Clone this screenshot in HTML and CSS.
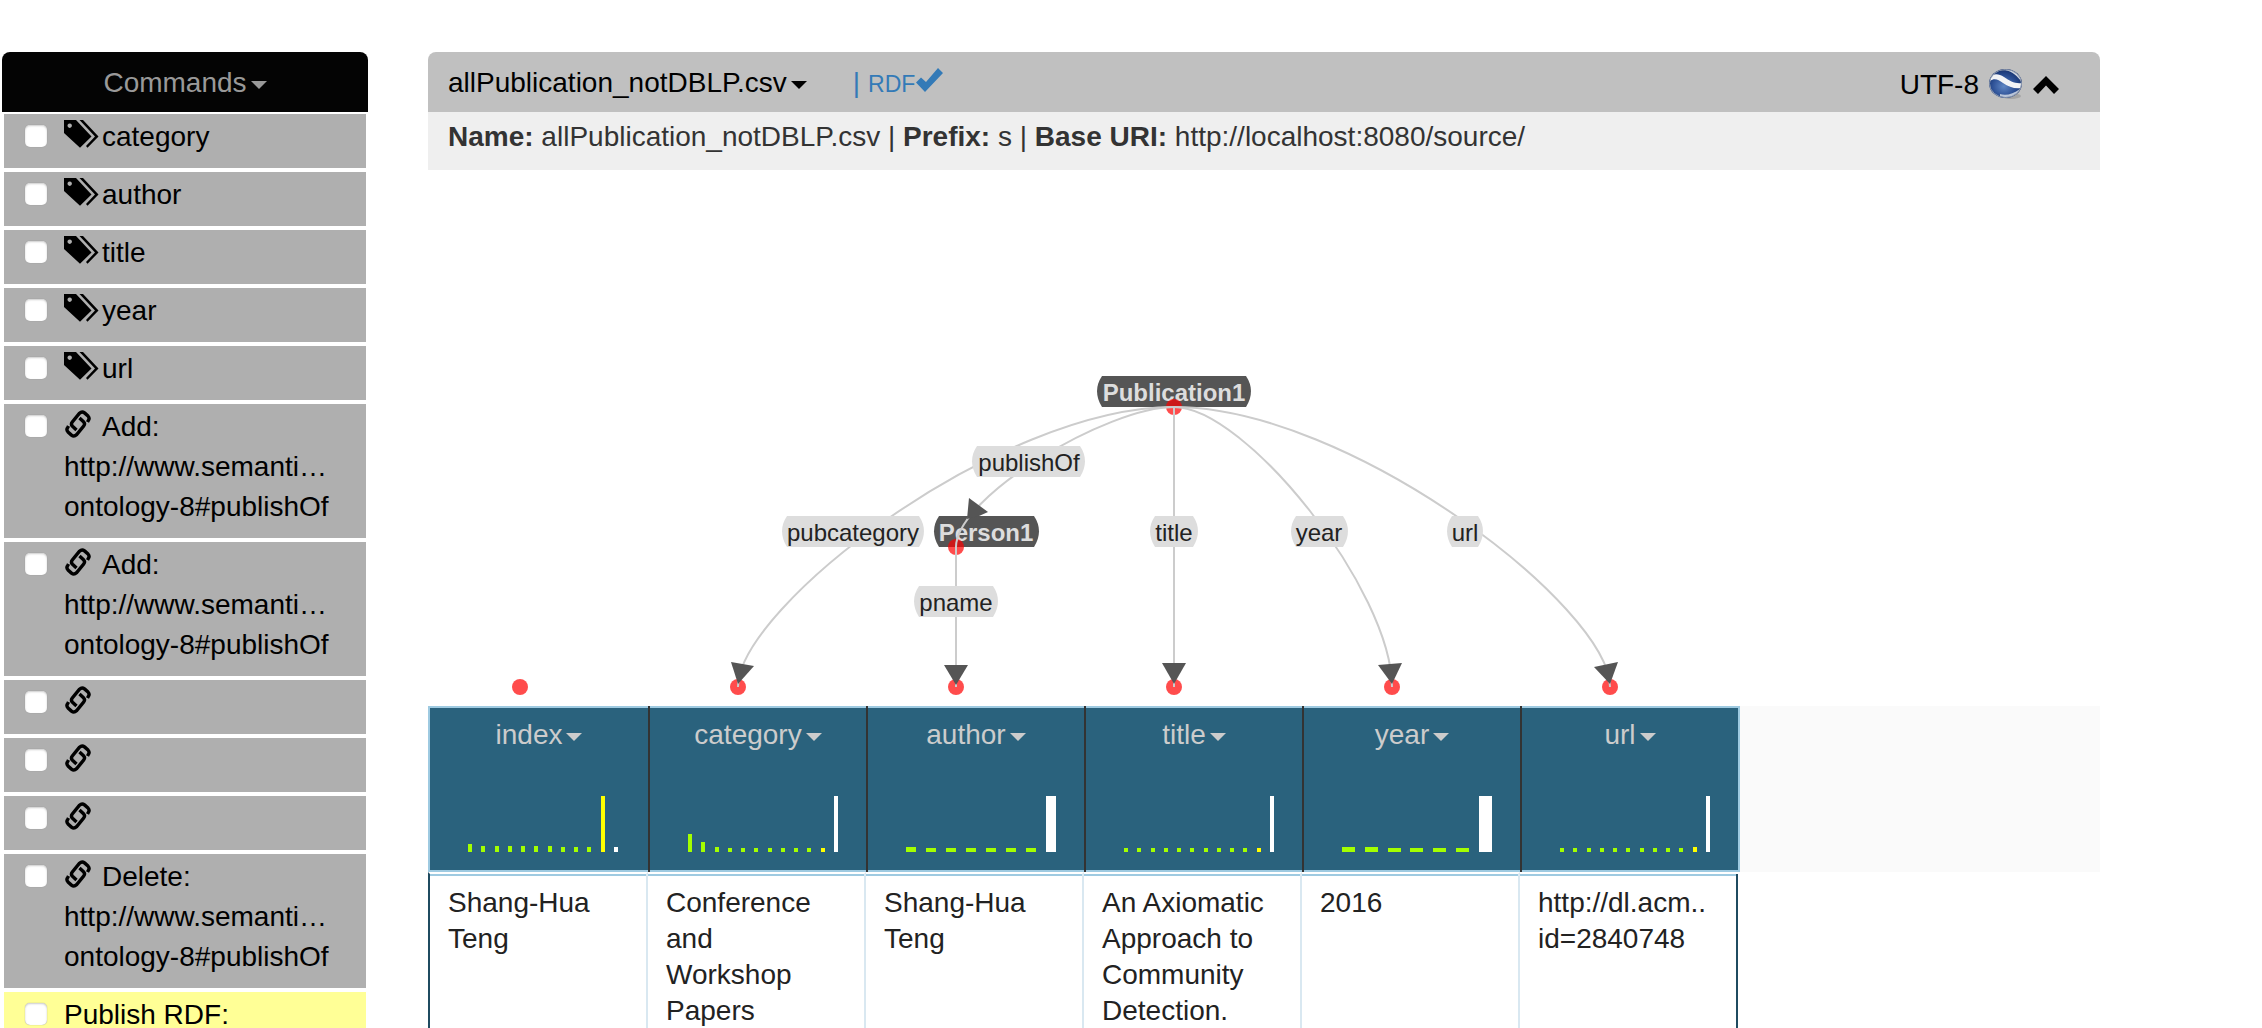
FILE: index.html
```html
<!DOCTYPE html>
<html lang="en">
<head>
<meta charset="utf-8">
<title>allPublication_notDBLP.csv</title>
<link rel="stylesheet" href="styles.css">
</head>
<body>
<svg class="sprite" aria-hidden="true">
  <symbol id="tags" viewBox="0 0 38 28">
    <path fill-rule="evenodd" d="M0 0H12L27.500 16.500L16 27.700L0 13ZM5.700 3.500a2.200 2.200 0 1 0 .01 0Z"/>
    <path d="M15.500 0H19L34.500 16.500L23.500 27.700L22 26L31 16.500Z"/>
  </symbol>
  <symbol id="link" viewBox="0 0 38 28">
    <g fill="none" stroke="#000" stroke-width="3.400">
      <path d="M12.500 20L8.500 16.300Q6.500 14.300 8.300 12L15.500 3.200Q18 .8 20.500 2.900L24 6Q26 8.300 24.300 10.500L23.500 12"/>
      <path d="M15.500 8L19.500 11.700Q21.500 13.700 19.700 16L12.500 24.800Q10 27.200 7.500 25.100L4 22Q2 19.700 3.700 17.500L4.500 16"/>
    </g>
  </symbol>
</svg>
<div class="page">
  <aside class="commands">
    <button class="commands-title" type="button">Commands<span class="caret"></span></button>
    <ul class="command-list">
      <li class="command"><input type="checkbox" id="c1"><label for="c1"><svg class="icon"><use href="#tags"/></svg>category</label></li>
      <li class="command"><input type="checkbox" id="c2"><label for="c2"><svg class="icon"><use href="#tags"/></svg>author</label></li>
      <li class="command"><input type="checkbox" id="c3"><label for="c3"><svg class="icon"><use href="#tags"/></svg>title</label></li>
      <li class="command"><input type="checkbox" id="c4"><label for="c4"><svg class="icon"><use href="#tags"/></svg>year</label></li>
      <li class="command"><input type="checkbox" id="c5"><label for="c5"><svg class="icon"><use href="#tags"/></svg>url</label></li>
      <li class="command"><input type="checkbox" id="c6"><label for="c6"><svg class="icon"><use href="#link"/></svg>Add:<br>http://www.semanti…<br>ontology-8#publishOf</label></li>
      <li class="command"><input type="checkbox" id="c7"><label for="c7"><svg class="icon"><use href="#link"/></svg>Add:<br>http://www.semanti…<br>ontology-8#publishOf</label></li>
      <li class="command"><input type="checkbox" id="c8"><label for="c8" aria-label="Link"><svg class="icon"><use href="#link"/></svg></label></li>
      <li class="command"><input type="checkbox" id="c9"><label for="c9" aria-label="Link"><svg class="icon"><use href="#link"/></svg></label></li>
      <li class="command"><input type="checkbox" id="c10"><label for="c10" aria-label="Link"><svg class="icon"><use href="#link"/></svg></label></li>
      <li class="command"><input type="checkbox" id="c11"><label for="c11"><svg class="icon"><use href="#link"/></svg>Delete:<br>http://www.semanti…<br>ontology-8#publishOf</label></li>
      <li class="command published"><input type="checkbox" id="c12"><label for="c12">Publish RDF:</label></li>
    </ul>
  </aside>

  <main class="worksheet">
    <header class="sheet-title">
      <button class="sheet-name" type="button">allPublication_notDBLP.csv<span class="caret"></span></button>
      <a class="rdf" href="#rdf"><span class="bar-mark">|</span>RDF<svg class="check" viewBox="0 0 28 24"><path d="M0 14.500L5 9.500L10 14L22 0L27 5L9 24Z"/></svg></a>
      <div class="sheet-tools">
        <button class="encoding" type="button">UTF-8</button>
        <svg class="globe" viewBox="0 0 34 32">
          <defs>
            <radialGradient id="sea" cx=".45" cy=".6" r=".6"><stop offset="0" stop-color="#5f86c4"/><stop offset=".6" stop-color="#2c4f94"/><stop offset="1" stop-color="#16306b"/></radialGradient>
            <clipPath id="ball"><ellipse cx="16.500" cy="14.500" rx="16" ry="14"/></clipPath>
          </defs>
          <ellipse cx="22" cy="27" rx="10" ry="3" fill="#999" opacity=".7"/>
          <ellipse cx="16.500" cy="14.500" rx="16.500" ry="14.500" fill="url(#sea)"/>
          <g clip-path="url(#ball)">
            <path d="M1 10C3 4 9 4 15 8C21 12 26 15 33 14L33 19C25 20 20 18 14 14C9 10 5 9 1 12Z" fill="#f2f3f6"/>
            <path d="M13 1C22 1 26 5 32 12L33 7L25 0Z" fill="#cfd5e0"/>
            <path d="M11 25C17 27 24 25 31 20L29 25C22 29 16 29 11 27Z" fill="#b9c5da"/>
          </g>
          <ellipse cx="16.500" cy="14.500" rx="16" ry="14" fill="none" stroke="#8c98ad"/>
        </svg>
        <button class="collapse" type="button" aria-label="Collapse"><svg viewBox="0 0 26 18"><path d="M13 0L26 13L21 18L13 9.500L5 18L0 13Z"/></svg></button>
      </div>
    </header>
    <p class="sheet-info"><b>Name:</b> allPublication_notDBLP.csv | <b>Prefix:</b> s | <b>Base URI:</b> http://localhost:8080/source/</p>

    <svg class="model" width="1672" height="536" role="img" aria-label="Semantic model">
      <g transform="translate(-428 -170)">
        <g class="node">
          <path d="M1102 376H1246Q1256 391 1246 407H1102Q1092 391 1102 376Z"/><text x="1174" y="401">Publication1</text>
          <path d="M939 516H1034Q1044 531 1034 547H939Q929 531 939 516Z"/><text x="986" y="541">Person1</text>
        </g>
        <g class="dots">
          <circle cx="1174" cy="407" r="8"/><circle cx="956" cy="547" r="8"/>
          <circle cx="520" cy="687" r="8"/><circle cx="738" cy="687" r="8"/><circle cx="956" cy="687" r="8"/>
          <circle cx="1174" cy="687" r="8"/><circle cx="1392" cy="687" r="8"/><circle cx="1610" cy="687" r="8"/>
        </g>
        <g class="links">
          <path d="M1174 407C999 407 738 607 738 687"/>
          <path d="M1174 407C1107 407 956 497 956 547"/>
          <path d="M956 547V687"/>
          <path d="M1174 407V687"/>
          <path d="M1174 407C1246 407 1392 591 1392 687"/>
          <path d="M1174 407C1349 407 1610 607 1610 687"/>
        </g>
        <g class="arrows">
          <path d="M731 662L754 666L738 684Z"/>
          <path d="M969 498L988 512L979 516L967 519Z"/>
          <path d="M944 665H968L956 685Z"/>
          <path d="M1162 663H1186L1174 684Z"/>
          <path d="M1378 665L1402 663L1392 684Z"/>
          <path d="M1594 667L1618 662L1610 684Z"/>
        </g>
        <g class="link-label">
          <path d="M977 446H1080Q1090 461 1080 477H977Q967 461 977 446Z"/><text x="1029" y="471">publishOf</text>
          <path d="M787 516H919Q929 531 919 547H787Q777 531 787 516Z"/><text x="853" y="541">pubcategory</text>
          <path d="M919 586H993Q1003 601 993 617H919Q909 601 919 586Z"/><text x="956" y="611">pname</text>
          <path d="M1155 516H1193Q1203 531 1193 547H1155Q1145 531 1155 516Z"/><text x="1174" y="541">title</text>
          <path d="M1296 516H1343Q1353 531 1343 547H1296Q1286 531 1296 516Z"/><text x="1319" y="541">year</text>
          <path d="M1452 516H1478Q1488 531 1478 547H1452Q1442 531 1452 516Z"/><text x="1465" y="541">url</text>
        </g>
      </g>
    </svg>

    <div class="table-strip">
      <table class="data">
        <thead>
          <tr>
            <th scope="col"><button class="column-menu" type="button">index<span class="caret"></span></button>
              <div class="chart thin"><i style="height:8px"></i><i style="height:6px"></i><i style="height:6px"></i><i style="height:6px"></i><i style="height:6px"></i><i style="height:6px"></i><i style="height:6px"></i><i style="height:5px"></i><i style="height:5px"></i><i style="height:5px"></i><i class="yellow" style="height:56px"></i><i class="white" style="height:5px"></i></div></th>
            <th scope="col"><button class="column-menu" type="button">category<span class="caret"></span></button>
              <div class="chart thin"><i style="height:18px"></i><i style="height:10px"></i><i style="height:5px"></i><i style="height:4px"></i><i style="height:4px"></i><i style="height:4px"></i><i style="height:4px"></i><i style="height:4px"></i><i style="height:4px"></i><i style="height:4px"></i><i class="yellow" style="height:4px"></i><i class="white" style="height:56px"></i></div></th>
            <th scope="col"><button class="column-menu" type="button">author<span class="caret"></span></button>
              <div class="chart mid"><i style="height:5px"></i><i style="height:4px"></i><i style="height:4px"></i><i style="height:4px"></i><i style="height:4px"></i><i style="height:4px"></i><i style="height:4px"></i><i class="white" style="height:56px"></i></div></th>
            <th scope="col"><button class="column-menu" type="button">title<span class="caret"></span></button>
              <div class="chart thin"><i style="height:4px"></i><i style="height:4px"></i><i style="height:4px"></i><i style="height:4px"></i><i style="height:4px"></i><i style="height:4px"></i><i style="height:4px"></i><i style="height:4px"></i><i style="height:4px"></i><i style="height:4px"></i><i class="yellow" style="height:4px"></i><i class="white" style="height:56px"></i></div></th>
            <th scope="col"><button class="column-menu" type="button">year<span class="caret"></span></button>
              <div class="chart wide"><i style="height:5px"></i><i style="height:5px"></i><i style="height:4px"></i><i style="height:4px"></i><i style="height:4px"></i><i style="height:4px"></i><i class="white" style="height:56px"></i></div></th>
            <th scope="col"><button class="column-menu" type="button">url<span class="caret"></span></button>
              <div class="chart thin"><i style="height:4px"></i><i style="height:4px"></i><i style="height:4px"></i><i style="height:4px"></i><i style="height:4px"></i><i style="height:4px"></i><i style="height:4px"></i><i style="height:4px"></i><i style="height:4px"></i><i style="height:4px"></i><i class="yellow" style="height:5px"></i><i class="white" style="height:56px"></i></div></th>
          </tr>
        </thead>
        <tbody>
          <tr>
            <td>Shang-Hua Teng</td>
            <td>Conference and Workshop Papers</td>
            <td>Shang-Hua Teng</td>
            <td>An Axiomatic Approach to Community Detection.</td>
            <td>2016</td>
            <td>http://dl.acm..<br>id=2840748</td>
          </tr>
        </tbody>
      </table>
    </div>
  </main>
</div>
</body>
</html>
```
FILE: styles.css
```css
* {
  box-sizing: border-box;
}

body {
  margin: 0;
  height: 100vh;
  overflow: hidden;
  background: #fff;
  color: #333;
  font: 28px/40px "Liberation Sans", Arial, Helvetica, sans-serif;
}

button {
  padding: 0;
  border: 0;
  background: none;
  color: inherit;
  font: inherit;
  cursor: pointer;
}

.sprite {
  display: none;
}

.page {
  display: grid;
  grid-template-columns: 366px minmax(0, 1fr);
  column-gap: 60px;
  align-items: start;
  padding: 52px 162px 0 2px;
}

.caret {
  display: inline-block;
  margin-left: 4px;
  vertical-align: middle;
  border-top: 8px solid;
  border-left: 8px solid transparent;
  border-right: 8px solid transparent;
}

/* Command history */

.commands-title {
  display: block;
  width: 100%;
  height: 60px;
  padding-top: 2px;
  border-radius: 8px 8px 0 0;
  background: #040404;
  color: #999;
}

.command-list {
  display: flex;
  flex-direction: column;
  gap: 4px;
  margin: 0;
  padding: 2px;
  list-style: none;
}

.command {
  display: flex;
  gap: 17px;
  padding: 3px 20px 11px 21px;
  background: #afafaf;
  color: #000;
}

.command.published {
  background: #ffff96;
}

.command input {
  appearance: none;
  flex: none;
  width: 22px;
  height: 22px;
  margin: 8px 0 0;
  border-radius: 5px;
  background: #fff;
  box-shadow: 0 0 1px #888, inset 0 1px 2px #ccc;
}

.command label {
  min-height: 40px;
  white-space: nowrap;
}

.icon {
  width: 38px;
  height: 28px;
  vertical-align: -2px;
}

/* Worksheet header */

.sheet-title {
  display: flex;
  align-items: center;
  height: 60px;
  padding: 2px 41px 0 20px;
  border-radius: 8px 8px 0 0;
  background: #c0c0c0;
  color: #000;
}

.rdf {
  margin-left: 46px;
  color: #337ab7;
  font-size: 23px;
  text-decoration: none;
}

.bar-mark {
  margin-right: 8px;
  font-size: 28px;
}

.check {
  width: 28px;
  height: 24px;
  margin-left: 1px;
  fill: #337ab7;
}

.sheet-tools {
  display: flex;
  align-items: center;
  gap: 10px;
  margin-left: auto;
  padding-top: 4px;
}

.globe {
  width: 34px;
  height: 32px;
}

.collapse svg {
  display: block;
  width: 26px;
  height: 18px;
}

.sheet-info {
  margin: 0;
  padding: 5px 20px 13px;
  background: #efefef;
}

/* Semantic model graph */

.model {
  display: block;
  font-size: 24px;
  text-anchor: middle;
}

.node path {
  fill: #555;
}

.node text {
  fill: #ddd;
  font-weight: bold;
}

.dots {
  fill: #f00;
  fill-opacity: 0.7;
}

.links {
  fill: none;
  stroke: #ccc;
  stroke-width: 2px;
}

.arrows {
  fill: #555;
}

.link-label path {
  fill: #ddd;
}

.link-label text {
  fill: #222;
}

/* Data table */

.table-strip {
  background: linear-gradient(#fafafa, #fafafa) 0 0 / 100% 166px no-repeat;
}

.data {
  width: 1312px;
  table-layout: fixed;
  border-collapse: separate;
  border-spacing: 0;
}

.data th {
  width: 218px;
  height: 166px;
  padding: 9px 0 20px;
  border-left: 2px solid #333;
  background: #2a627d;
  box-shadow: inset 0 2px #9ecae1, inset 0 -2px #9ecae1;
  color: #ccc;
  font-weight: normal;
  vertical-align: top;
}

.data th:first-child {
  width: 220px;
  border-left-color: #9ecae1;
}

.data th:last-child {
  width: 220px;
  border-right: 2px solid #9ecae1;
}

.column-menu {
  display: block;
  width: 100%;
}

.chart {
  display: flex;
  align-items: flex-end;
  justify-content: space-between;
  width: 150px;
  height: 56px;
  margin: 41px 0 0 38px;
}

.chart i {
  background: #a4ff00;
}

.chart .yellow {
  background: #ff0;
}

.chart .white {
  background: #fff;
}

.thin i {
  width: 4px;
}

.mid i {
  width: 10px;
}

.wide i {
  width: 13px;
}

.data td {
  height: 200px;
  padding: 11px 20px 10px 18px;
  border-top: 2px solid #fff;
  border-right: 2px solid #d9e8f1;
  background: #fff;
  box-shadow: inset 0 2px #9ecae1;
  color: #222;
  line-height: 36px;
  vertical-align: top;
}

.data td:first-child {
  border-left: 2px solid #1f4b60;
}

.data td:last-child {
  border-right-color: #fff;
  box-shadow: inset -2px 0 #1f4b60, inset 0 2px #9ecae1;
  white-space: nowrap;
}
```
